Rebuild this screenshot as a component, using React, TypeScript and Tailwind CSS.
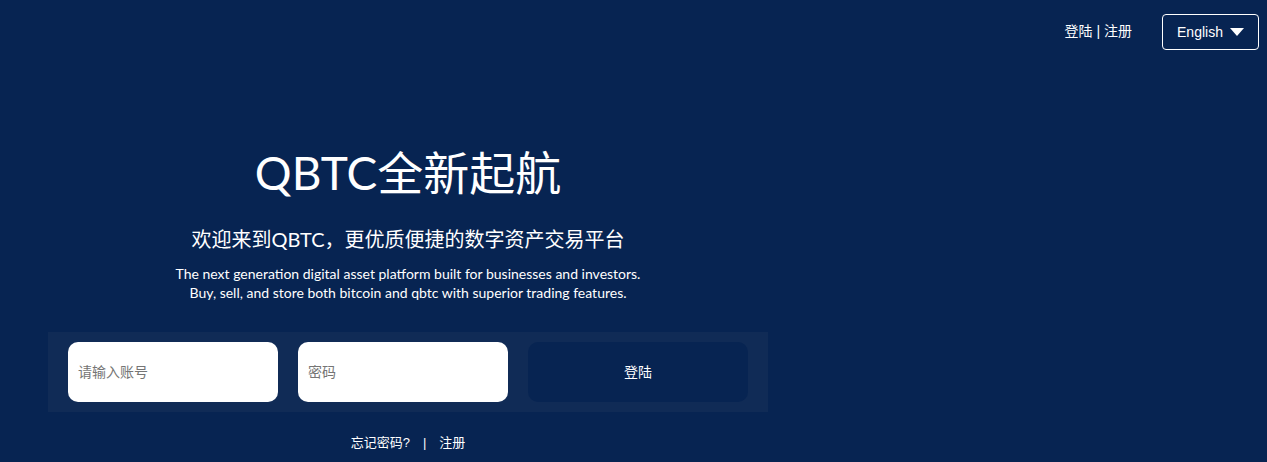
import React from "react";

function Caret() {
    return (
        <svg width="14" height="9" viewBox="0 0 14 9" className="ml-[7px]">
            <path d="M0 0 H14 L7 8 Z" fill="#ffffff" />
        </svg>
    );
}

function App() {
    return (
        <div className="w-[1267px] h-[462px] overflow-hidden bg-[#072452] text-white font-['Lato','Noto_Sans_CJK_SC',sans-serif]">
            {/* top bar */}
            <div className="flex justify-end items-center h-[63px] pr-[8px]">
                <div className="text-[14px] font-['Liberation_Sans','Noto_Sans_CJK_SC',sans-serif] mr-[30px]">
                    登陆 | 注册
                </div>
                <button className="flex items-center justify-center w-[97px] h-[36px] pt-[1px] border border-white rounded-[4px] text-[14px] font-['Liberation_Sans',sans-serif]">
                    English
                    <Caret />
                </button>
            </div>

            {/* hero */}
            <div className="w-[816px] flex flex-col items-center">
                <h1 className="mt-[83px] text-[46px] leading-[54px] font-['Lato','Noto_Sans_CJK_SC',sans-serif]">
                    QBTC全新起航
                </h1>
                <p className="mt-[26px] text-[20px] leading-[26px]">
                    欢迎来到QBTC，更优质便捷的数字资产交易平台
                </p>
                <p className="mt-[12px] text-[14px] leading-[19px] text-center">
                    The next generation digital asset platform built for businesses and investors.
                    <br />
                    Buy, sell, and store both bitcoin and qbtc with superior trading features.
                </p>

                <form className="mt-[30px] w-[720px] h-[80px] bg-[#102b56] flex items-center gap-[20px] px-[20px]">
                    <input
                        placeholder="请输入账号"
                        className="w-[210px] h-[60px] rounded-[10px] bg-white px-[10px] text-[14px] text-gray-700 placeholder:text-[#757575] outline-none font-['Liberation_Sans','Noto_Sans_CJK_SC',sans-serif]"
                    />
                    <input
                        type="text"
                        placeholder="密码"
                        className="w-[210px] h-[60px] rounded-[10px] bg-white px-[10px] text-[14px] text-gray-700 placeholder:text-[#757575] outline-none font-['Liberation_Sans','Noto_Sans_CJK_SC',sans-serif]"
                    />
                    <button
                        type="button"
                        className="w-[220px] h-[60px] rounded-[10px] bg-[#072452] text-[14px] font-['Liberation_Sans','Noto_Sans_CJK_SC',sans-serif]"
                    >
                        登陆
                    </button>
                </form>

                <div className="mt-[21px] flex items-center text-[13px] font-['Liberation_Sans','Noto_Sans_CJK_SC',sans-serif]">
                    <span>忘记密码?</span>
                    <span className="mx-[13px]">|</span>
                    <span>注册</span>
                </div>
            </div>
        </div>
    );
}

export default App;
